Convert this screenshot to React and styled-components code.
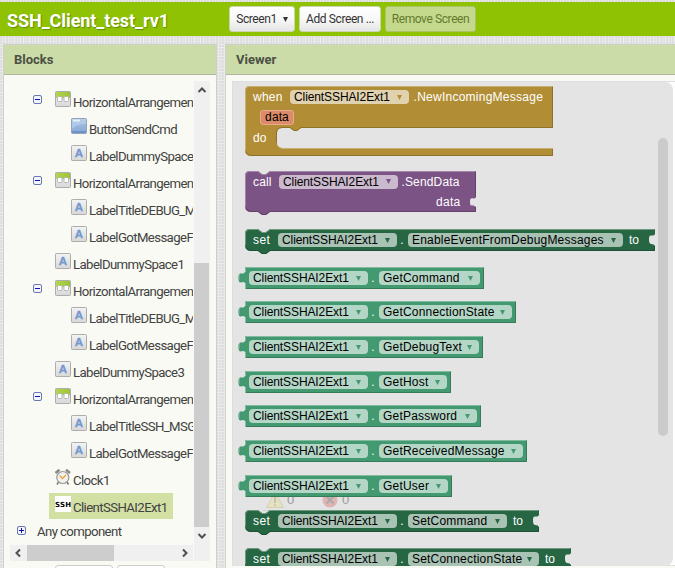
import React from 'react';
import styled, { createGlobalStyle } from 'styled-components';

const GlobalStyle = createGlobalStyle`
  * { box-sizing: border-box; }
  html, body { margin: 0; padding: 0; overflow: hidden; }
  body { font-family: Roboto, "Liberation Sans", sans-serif; color: #444; }
`;

const Page = styled.div`
  width: 675px;
  height: 568px;
  overflow: hidden;
  padding-top: 2px;
  display: flex;
  flex-direction: column;
  background-color: #ebebeb;
  background-image:
    radial-gradient(circle at 1px 1px, #d8d8d8 0.6px, transparent 1px),
    radial-gradient(circle at 2px 2px, #e0e0e0 0.6px, transparent 1px);
  background-size: 3px 3px, 5px 4px;
`;

const TopBar = styled.header`
  flex: none;
  height: 34px;
  padding: 4px 0 0 7px;
  display: flex;
  align-items: flex-start;
  background: #8fc202;
`;

const ProjectName = styled.h1`
  margin: 0;
  width: 222px;
  font-size: 18px;
  line-height: 29px;
  font-weight: 700;
  letter-spacing: -0.08px;
  color: #fff;
  text-shadow: 1px 1px 1px rgba(60, 90, 0, 0.5);
`;

const ToolButton = styled.button`
  width: ${p => p.$w}px;
  height: 26px;
  margin: 0 4px 0 0;
  padding: 0;
  border: 1px solid ${p => (p.$off ? '#a9c368' : '#c8d4b4')};
  border-radius: 3px;
  display: flex;
  align-items: center;
  justify-content: center;
  gap: 6px;
  font: 12px Roboto, sans-serif;
  letter-spacing: -0.4px;
  color: ${p => (p.$off ? '#63792f' : '#333')};
  background: ${p => (p.$off ? '#c4d98c' : 'linear-gradient(#fff, #f8f8f8 50%, #e6e6e6)')};
`;

const Columns = styled.main`
  flex: 1;
  min-height: 0;
  padding: 8px 0 0 3px;
  display: flex;
  gap: 8px;
`;

const Panel = styled.section`
  width: ${p => p.$w}px;
  flex: none;
  display: flex;
  flex-direction: column;
  border: solid #cfd0cc;
  border-width: 1px 1px 0 1px;
  background: #f9faf3;
`;

const PanelTitle = styled.h2`
  flex: none;
  height: 30px;
  margin: 0;
  padding-left: 10px;
  border-bottom: 1px solid #b0b5a4;
  background: #cbdca8;
  font-size: 13px;
  line-height: 30px;
  font-weight: 700;
  color: #4b4f44;
`;

const TreeArea = styled.div`
  display: grid;
  grid-template-columns: 183px 16px;
  grid-template-rows: 464px 16px;
  column-gap: 1px;
  margin: 6px 0 0 6px;
`;

const Tree = styled.div`
  overflow: hidden;
  padding-top: 7px;
`;

const TreeRow = styled.div`
  display: flex;
  height: 27px;
  padding-left: ${p => p.$indent}px;
  align-items: flex-start;
`;

const Toggle = styled.svg`
  flex: none;
  display: block;
  width: 9px;
  height: 9px;
  margin: ${p => p.$top}px ${p => p.$gap}px 0 0;
`;

const Item = styled.div`
  display: flex;
  gap: 2px;
  height: 26px;
  padding: 3px 5px 0 6px;
  background: ${p => (p.$selected ? '#d2e0a4' : 'transparent')};
`;

const ItemIcon = styled.svg`
  flex: none;
  display: block;
  width: 16px;
  height: 16px;
`;

const ItemLabel = styled.span`
  font-size: 13.2px;
  line-height: 24px;
  letter-spacing: -0.6px;
  white-space: nowrap;
  color: #424242;
`;

const VScroll = styled.div`
  grid-row: 1 / 3;
  grid-column: 2;
  display: flex;
  flex-direction: column;
  align-items: flex-start;
  background: #f0f0f0;
`;

const HScroll = styled.div`
  display: flex;
  height: 16px;
  background: #f0f0f0;
`;

const Arrow = styled.svg`
  flex: none;
  display: block;
  width: 16px;
  height: 16px;
  fill: none;
  stroke: #505050;
  stroke-width: 2;
`;

const VThumb = styled.div`
  width: 15px;
  height: 264px;
  margin: 166px 0 2px;
  background: #cdcdcd;
`;

const HThumb = styled.div`
  width: 87px;
  margin: 0 63px 0 1px;
  background: #cdcdcd;
`;

const Actions = styled.div`
  display: flex;
  gap: 4px;
  margin: 4px 0 0 51px;
`;

const ActionTop = styled.div`
  width: ${p => p.$w}px;
  height: 26px;
  border: 1px solid #ccc;
  border-radius: 3px;
  background: #fff;
`;

const Workspace = styled.div`
  position: relative;
  margin: 6px 0 0 6px;
  width: 443px;
  height: 485px;
  border: solid #dedede;
  border-width: 1px 0 1px 1px;
  background: #fff;
`;

const Flyout = styled.div`
  width: 440px;
  height: 484px;
  overflow: hidden;
  border-radius: 0 8px 8px 0;
  background: #e4e4e4;
  display: flex;
  justify-content: space-between;
`;

const BlockList = styled.div`
  width: 419px;
  padding: 4px 0 0 5px;
  position: relative;
`;

const FlyThumb = styled.div`
  flex: none;
  width: 10px;
  height: 298px;
  margin: 56px 5px 0 0;
  border-radius: 5px;
  background: #cbcbcb;
`;

const Warnings = styled.svg`
  position: absolute;
  left: 30px;
  top: 408px;
  width: 112px;
  height: 22px;
`;

const Block = styled.div`
  position: relative;
  width: ${p => p.$w}px;
  height: ${p => p.$h}px;
  margin: 0 0 ${p => p.$after}px ${p => (p.$getter ? 0 : 7)}px;
  padding-left: ${p => (p.$getter ? 11 : 8)}px;
`;

const Shape = styled.svg`
  position: absolute;
  left: 0;
  top: 0;
  overflow: visible;
  display: block;
`;

const Line = styled.div`
  position: relative;
  display: flex;
  align-items: center;
  height: ${p => p.$h || 22}px;
  padding-left: ${p => p.$pad || 0}px;
`;

const Word = styled.span`
  flex: none;
  width: ${p => (p.$w ? `${p.$w}px` : 'auto')};
  margin-left: ${p => p.$ml || 0}px;
  font: 12px/14px "Liberation Sans", Arial, sans-serif;
  letter-spacing: ${p => p.$ls || 0}px;
  white-space: nowrap;
  color: #fff;
`;

const Field = styled.span`
  flex: none;
  width: ${p => p.$w}px;
  height: 14px;
  padding: 0 7px 0 4px;
  border-radius: 4px;
  display: flex;
  align-items: center;
  justify-content: space-between;
  font: 12px/14px "Liberation Sans", Arial, sans-serif;
  letter-spacing: ${p => p.$ls}px;
  white-space: nowrap;
  color: #000;
  background: ${p => p.$bg};
`;

const Caret = styled.svg`
  flex: none;
  width: 5px;
  height: 5px;
`;

const Param = styled.span`
  width: 34px;
  height: 15px;
  border: 1px solid #eaa88c;
  border-radius: 3px;
  background: #dc8b6a;
  font: 12px/13px "Liberation Sans", Arial, sans-serif;
  letter-spacing: 0.1px;
  text-align: center;
  color: #000;
`;

const THEMES = {
  event: { fill: '#b18e35', light: '#c8b072', dark: '#8e722a', field: '#e0d2ae' },
  call: { fill: '#7c5385', light: '#a386aa', dark: '#63426a', field: '#cbbace' },
  set: { fill: '#266643', light: '#6e9a80', dark: '#1e5236', field: '#a8c2b4' },
  get: { fill: '#439970', light: '#82bb9f', dark: '#367a5a', field: '#b4d6c6' },
};

function Outline({ w, h, kind, d, lit, shade }) {
  const t = THEMES[kind];
  return (
    <Shape width={w} height={h}>
      <path d={d} fill={t.fill} />
      <path d={shade} fill="none" stroke={t.dark} />
      <path d={lit} fill="none" stroke={t.light} />
    </Shape>
  );
}

function Dropdown({ kind, w, ls = 0.2, children }) {
  const t = THEMES[kind];
  return (
    <Field $w={w} $bg={t.field} $ls={ls}>
      {children}
      <Caret viewBox="0 0 5 5"><path d="M0 0H5L2.5 5Z" fill={t.fill} /></Caret>
    </Field>
  );
}

const Component = ({ kind }) => <Dropdown kind={kind} w={119} ls={-0.1}>ClientSSHAI2Ext1</Dropdown>;

function EventBlock() {
  return (
    <Block $w={308} $h={70} $after={15}>
      <Outline w={308} h={70} kind="event"
        d="M5 0H308V42H56L52 45H49L45 42H37Q32 42 32 47V57Q32 62 37 62H308V70H6Q0 70 0 64V5Q0 0 5 0Z"
        lit="M0.5 64V5Q0.5 0.5 5 0.5H307.5M33 60Q35 62.5 38 62.5H308"
        shade="M307.5 1V41.5H56L52 44.5H49L45 41.5H37Q31.5 42 31.5 47V57M307.5 62V69.5H6Q2 69 1 66" />
      <Line $h={22}>
        <Word $w={37} $ls={0.25}>when</Word>
        <Component kind="event" />
        <Word $ls={0.25} $ml={1}>&nbsp;.NewIncomingMessage</Word>
      </Line>
      <Line $h={19} $pad={7}><Param>data</Param></Line>
      <Line $h={22}><Word>do</Word></Line>
    </Block>
  );
}

function CallBlock() {
  return (
    <Block $w={231} $h={41} $after={17}>
      <Outline w={231} h={41} kind="call"
        d="M5 0H13L17 3H21L25 0H231V26C229 30 225 24 225 31S229 33 231 36V41H25L21 44H17L13 41H6Q0 41 0 35V5Q0 0 5 0Z"
        lit="M0.5 35V5Q0.5 0.5 5 0.5H13L17 3.5H21L25 0.5H230.5M225.5 34Q227 35.5 229 34"
        shade="M230.5 1V26M230.5 36V40.5H25L21 43.5H17L13 40.5H6Q2 40 1 37" />
      <Line $h={21}>
        <Word $w={26} $ls={0.15}>call</Word>
        <Component kind="call" />
        <Word $ls={0.15}>&nbsp;.SendData</Word>
      </Line>
      <Line $h={20} $pad={183}><Word $ls={0.3}>data</Word></Line>
    </Block>
  );
}

function SetBlock({ w, field, name, after }) {
  return (
    <Block $w={w} $h={22} $after={after}>
      <Outline w={w} h={22} kind="set"
        d={`M5 0H13L17 3H21L25 0H${w}V5C${w - 2} 9 ${w - 6} 3 ${w - 6} 10.5S${w - 2} 13 ${w} 17V22H25L21 25H17L13 22H6Q0 22 0 16V5Q0 0 5 0Z`}
        lit={`M0.5 16V5Q0.5 0.5 5 0.5H13L17 3.5H21L25 0.5H${w - 0.5}`}
        shade={`M${w - 0.5} 17V21.5H25L21 24.5H17L13 21.5H6Q2 21 1 18`} />
      <Line>
        <Word $w={25} $ls={0.4}>set</Word>
        <Component kind="set" />
        <Word $w={11}>&nbsp;.</Word>
        <Dropdown kind="set" w={field}>{name}</Dropdown>
        <Word $ml={6}>to</Word>
      </Line>
    </Block>
  );
}

function GetBlock({ w, name, after }) {
  return (
    <Block $getter $w={w} $h={22} $after={after}>
      <Outline w={w} h={22} kind="get"
        d={`M7 0H${w}V22H7V16C5 13 0.5 19 0.5 11S5 9 7 5Z`}
        lit={`M7.5 22V16M7.5 5V0.5H${w - 0.5}M1 13V10Q1 6 3.5 6.5`}
        shade={`M${w - 0.5} 1V21.5H8`} />
      <Line>
        <Component kind="get" />
        <Word $w={11}>&nbsp;.</Word>
        <Dropdown kind="get" w={w - 145}>{name}</Dropdown>
      </Line>
    </Block>
  );
}

const GETTERS = [
  ['GetCommand', 246, 12],
  ['GetConnectionState', 278, 13],
  ['GetDebugText', 245, 13],
  ['GetHost', 213, 12],
  ['GetPassword', 243, 13],
  ['GetReceivedMessage', 289, 13],
  ['GetUser', 214, 13],
];

function Icon({ type }) {
  if (type === 'clock') {
    return (
      <ItemIcon viewBox="0 0 16 16">
        <path d="M0.5 4L4.5 0.8M11 0.8L15 4" stroke="#8b8b8b" strokeWidth="2.6" />
        <path d="M3.5 13L2 15.5M12 13L13.5 15.5" stroke="#777" strokeWidth="1.5" />
        <circle cx="7.8" cy="8.5" r="6" fill="#f1f1f0" stroke="#999" strokeWidth="1.2" />
        <path d="M4.6 6.5L7.5 9.5L11 6" fill="none" stroke="#eea43c" strokeWidth="1.3" />
      </ItemIcon>
    );
  }
  if (type === 'ssh') {
    return (
      <ItemIcon viewBox="0 0 16 16">
        <rect width="16" height="16" fill="#fff" />
        <text x="0" y="11" fontFamily="DejaVu Sans" fontWeight="700" fontSize="7" textLength="16" fill="#000">SSH</text>
      </ItemIcon>
    );
  }
  return (
    <ItemIcon viewBox="0 0 16 16">
      <defs>
        <linearGradient id="gGray" x2="0" y2="1"><stop stopColor="#f3f3f3" /><stop offset="1" stopColor="#d8d8d8" /></linearGradient>
        <linearGradient id="gBlue" x2="0" y2="1"><stop stopColor="#a8c4e6" /><stop offset="1" stopColor="#86a8d4" /></linearGradient>
        <linearGradient id="gGreen" x2="1" y2="0"><stop stopColor="#b2d64c" /><stop offset="1" stopColor="#9cc434" /></linearGradient>
      </defs>
      <rect x="0.5" y="0.5" width="15" height="15" rx="0.8" fill={type === 'button' ? 'url(#gBlue)' : 'url(#gGray)'} stroke={type === 'button' ? '#92a4bc' : '#adadad'} />
      {type === 'button' && (
        <g>
          <path d="M1 1H15V6Q6 6 1 11Z" fill="#c0d5ee" opacity="0.55" />
          <path d="M2 2.5H9" stroke="#e6eef8" strokeWidth="2" />
          <path d="M1 14H15" stroke="#6f91c4" strokeWidth="2" />
        </g>
      )}
      {type === 'label' && (
        <text x="7.8" y="12" textAnchor="middle" fontFamily="Liberation Sans" fontWeight="700" fontSize="11.5" fill="#7398d0" stroke="#7398d0" strokeWidth="0.3">A</text>
      )}
      {type === 'horiz' && (
        <g>
          <rect x="1" y="1" width="14" height="6" fill="url(#gGreen)" />
          <rect x="2.5" y="5.5" width="4.5" height="5" rx="1" fill="#fff" stroke="#b4b4b4" />
          <rect x="9" y="5.5" width="4.5" height="5" rx="1" fill="#fff" stroke="#b4b4b4" />
        </g>
      )}
    </ItemIcon>
  );
}

function ToggleBox({ plus, gap, top }) {
  return (
    <Toggle viewBox="0 0 9 9" $gap={gap} $top={top}>
      <rect x="0.5" y="0.5" width="8" height="8" rx="1.5" fill="#f4f5fb" stroke="#6b76b4" />
      <path d={plus ? 'M2 4.5H7M4.5 2V7' : 'M2 4.5H7'} stroke="#1010b0" />
    </Toggle>
  );
}

const ROWS = [
  ['horiz', 'HorizontalArrangement1', 1],
  ['button', 'ButtonSendCmd', 2],
  ['label', 'LabelDummySpace2', 2],
  ['horiz', 'HorizontalArrangement2', 1],
  ['label', 'LabelTitleDEBUG_MSG', 2],
  ['label', 'LabelGotMessageFrom', 2],
  ['label', 'LabelDummySpace1', 1],
  ['horiz', 'HorizontalArrangement3', 1],
  ['label', 'LabelTitleDEBUG_MSG', 2],
  ['label', 'LabelGotMessageFrom', 2],
  ['label', 'LabelDummySpace3', 1],
  ['horiz', 'HorizontalArrangement4', 1],
  ['label', 'LabelTitleSSH_MSG', 2],
  ['label', 'LabelGotMessageFrom', 2],
  ['clock', 'Clock1', 1],
  ['ssh', 'ClientSSHAI2Ext1', 1],
];

function ComponentTree() {
  return (
    <Tree>
      {ROWS.map(([type, label, level], i) => (
        <TreeRow key={i} $indent={type === 'horiz' ? 23 : level === 1 ? 39 : 55}>
          {type === 'horiz' && <ToggleBox gap={7} top={7} />}
          <Item $selected={type === 'ssh'}>
            <Icon type={type} />
            <ItemLabel>{label}</ItemLabel>
          </Item>
        </TreeRow>
      ))}
      <TreeRow $indent={7}>
        <ToggleBox plus gap={11} top={6} />
        <ItemLabel>Any component</ItemLabel>
      </TreeRow>
    </Tree>
  );
}

export default function App() {
  return (
    <Page>
      <GlobalStyle />
      <TopBar>
        <ProjectName>SSH_Client_test_rv1</ProjectName>
        <ToolButton $w={66}>
          Screen1
          <svg width="5" height="5"><path d="M0 0H5L2.5 5Z" fill="#333" /></svg>
        </ToolButton>
        <ToolButton $w={82}>Add Screen ...</ToolButton>
        <ToolButton $w={91} $off>Remove Screen</ToolButton>
      </TopBar>
      <Columns>
        <Panel $w={214}>
          <PanelTitle>Blocks</PanelTitle>
          <TreeArea>
            <ComponentTree />
            <VScroll>
              <Arrow><path d="M4.5 11L8 7.5L11.5 11" /></Arrow>
              <VThumb />
              <Arrow><path d="M4.5 5L8 8.5L11.5 5" /></Arrow>
            </VScroll>
            <HScroll>
              <Arrow><path d="M10 4.5L6.5 8L10 11.5" /></Arrow>
              <HThumb />
              <Arrow><path d="M6 4.5L9.5 8L6 11.5" /></Arrow>
            </HScroll>
          </TreeArea>
          <Actions>
            <ActionTop $w={58} />
            <ActionTop $w={48} />
          </Actions>
        </Panel>
        <Panel $w={452}>
          <PanelTitle>Viewer</PanelTitle>
          <Workspace>
            <Flyout>
              <BlockList>
                <Warnings viewBox="0 0 112 22">
                  <path d="M12 2L20.5 17.5H3.5Z" fill="#e6e2c0" stroke="#d2d0b4" />
                  <path d="M12 7V13M12 14.5V16" stroke="#b8b8a8" strokeWidth="1.5" />
                  <circle cx="67" cy="10" r="7.5" fill="#dfb4b4" />
                  <path d="M63.5 6.5L70.5 13.5M70.5 6.5L63.5 13.5" stroke="#aaa" strokeWidth="2" />
                  <text x="24" y="14" fontFamily="Liberation Sans" fontSize="13" fill="#999">0</text>
                  <text x="79" y="14" fontFamily="Liberation Sans" fontSize="13" fill="#999">0</text>
                  <path d="M0 20.5H109" stroke="#d2d2d2" />
                </Warnings>
                <EventBlock />
                <CallBlock />
                <SetBlock w={410} field={215} name="EnableEventFromDebugMessages" after={16} />
                {GETTERS.map(([name, w, after]) => <GetBlock key={name} name={name} w={w} after={after} />)}
                <SetBlock w={294} field={99} name="SetCommand" after={16} />
                <SetBlock w={326} field={131} name="SetConnectionState" after={0} />
              </BlockList>
              <FlyThumb />
            </Flyout>
          </Workspace>
        </Panel>
      </Columns>
    </Page>
  );
}
